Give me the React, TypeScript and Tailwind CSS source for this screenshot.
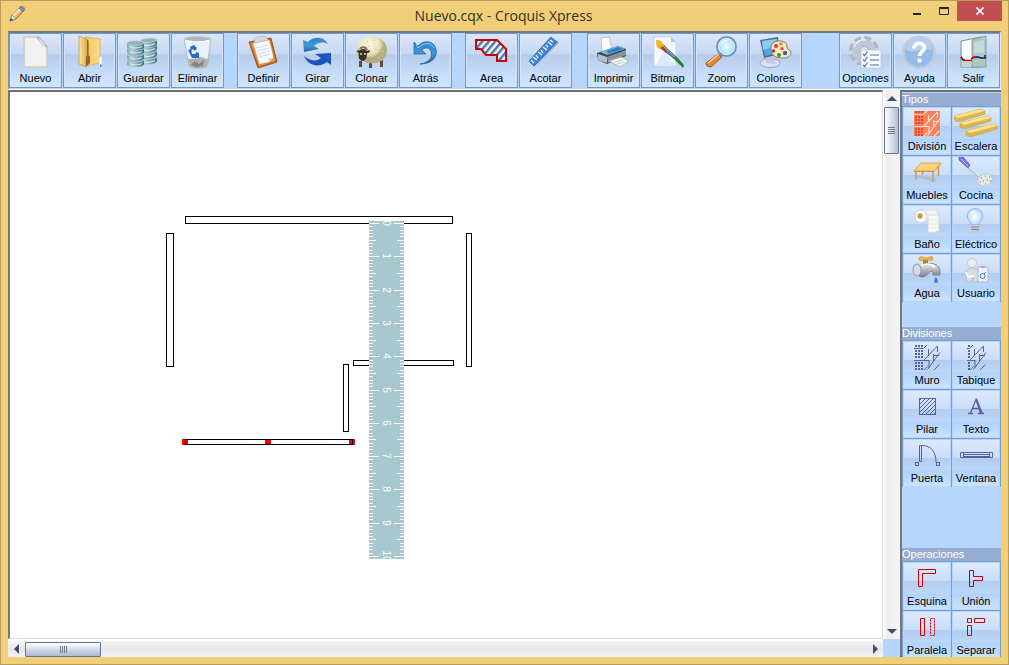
import React from 'react';
import type { ReactNode } from 'react';

type Tool = { label: string; icon: ReactNode };

const NAVY = '#5b5f9e';

/* ---------- Toolbar icons (37 x 34) ---------- */

const newIcon = (
  <>
    <path d="M7 2H22L30 11V32H7Z" fill="#f1f1f1" stroke="#cfccc0" strokeWidth="1.6" />
    <path d="M18 2H22L30 11V14C28 8 23 7 18 2Z" fill="#bdbdbd" />
    <path d="M21 2C22 6 23 9 30 12L22 2Z" fill="#e9e9e9" stroke="#a9a9a9" strokeWidth=".7" />
  </>
);

const openIcon = (
  <>
    <path d="M14 2L29 4V28L14 31Z" fill="url(#folderBack)" stroke="#d8a94b" strokeWidth=".8" />
    <path d="M28 22L31 21V31L28 32Z" fill="#fff" stroke="#bfc7d6" strokeWidth=".6" />
    <path d="M29 29l2 1-1 2h-1z" fill="#3a7be0" />
    <path d="M8 1L17 5V20L15 24V32L8 29Z" fill="url(#folderFront)" stroke="#c79a3c" strokeWidth=".8" />
    <path d="M16 5L17.500 6V20L19 22V28L15 32V22L16 20Z" fill="#8b6a25" />
  </>
);

const disk = (x: number, y: number) => (
  <g key={`${x}-${y}`}>
    <path d={`M${x} ${y}v4c0 4 17 4 17 0v-4z`} fill="url(#diskSide)" />
    <ellipse cx={x + 8.5} cy={y} rx="8.5" ry="2.2" fill="#8fb3be" stroke="#bcd5da" strokeWidth=".6" />
    <path d={`M${x + 2} ${y + 3.6}c3 1.8 9 1.8 13 0`} stroke="#d9edf0" strokeWidth="1" fill="none" />
  </g>
);

const saveIcon = (
  <>
    <g transform="translate(15 3) skewY(-4)">
      {[20, 14, 8, 3].map((y) => disk(0, y))}
    </g>
    {[25, 19, 13, 8].map((y) => disk(2, y))}
  </>
);

const deleteIcon = (
  <>
    <path d="M5 4L10 31C13 34 25 34 28 31L32 4Z" fill="#eaf0f8" stroke="#b9bcc6" />
    <path d="M9 25C13 22 16 26 19 23C22 20 26 25 30 24L28 31C25 34 13 34 10 31Z" fill="#b0b0b4" />
    <path d="M12 30l4-4 4 3 5-4-1 6-7 1z" fill="#85858b" />
    <ellipse cx="18.500" cy="4" rx="13.500" ry="2.400" fill="#aeb3bc" stroke="#c5c8ce" strokeWidth=".9" />
    <path d="M6 5c6 2.500 18 2.500 25 0" stroke="#fff" strokeWidth="1.200" fill="none" />
    <path d="M11 12l4-2 3 3-2 3-2-2-2 2zM9 15l3-1 1 5h4v4h-4zM17 17l3 1v5h-3v2l-2-4 2-3z" fill="#2b6bd0" />
  </>
);

const defineIcon = (
  <>
    <path d="M4 7L26 3L32 27L13 33Z" fill="#b5651d" stroke="#9b5518" strokeWidth=".9" />
    <path d="M5.500 8L25 4.500L30.500 26L14 31.500Z" fill="#e8923c" />
    <path d="M8 8L24 5L28.500 23L24 27L14.500 29Z" fill="#f8faff" />
    <path d="M24 27L23.500 23.500L28.500 23Z" fill="#c3cedd" />
    <path d="M11 13l12-3M12 16l12-3M13 19l12-3M14 22l11-3" stroke="#ccd8ee" strokeWidth="1" />
    <path d="M9 4c2-3 11-4 13-1l1 2-13 3z" fill="#d8dade" stroke="#aeb0b6" strokeWidth=".7" />
  </>
);

const rotateIcon = (
  <>
    <path d="M4 5L9 7C14 1 25 1 29 9C23 6 18 8 15 11L20 14L5 17Z" fill="url(#blueArrow)" />
    <path d="M32 18L32 30L28 27C20 33 9 31 5 21C11 26 18 27 22 23L16 19Z" fill="#1b55bc" />
  </>
);

const sheepIcon = (
  <>
    <path d="M6 26v6h3v-6zM16 28v5h3v-5zM27 26v6h3v-7z" fill="#5d4a39" />
    <ellipse cx="19" cy="15" rx="15" ry="13.500" fill="url(#wool)" />
    <path d="M13 6l2 1M20 5l2 1M26 9l2 1M22 14l2 1M29 16l2 1M18 20l2 1M25 22l2 1M15 11l2 1" stroke="#d5cc9f" strokeWidth="1" />
    <path d="M3 16l4-1c3-2 6-1 7 1l3-1c0 3-2 3-3 3 0 4-1 7-4 8-4 0-5-4-4-8z" fill="#3b3127" />
    <path d="M7 14c2-3 6-2 7 1" stroke="#7b6b52" strokeWidth="2" fill="none" />
    <circle cx="8" cy="19" r=".9" fill="#f0e9b0" />
    <circle cx="12" cy="19" r=".9" fill="#f0e9b0" />
  </>
);

const undoIcon = (
  <>
    <path d="M7 7L11 11C17 4 27 6 29 14C31 23 24 29 13 29C21 28 26 23 24 17C23 12 18 12 15 15L19 19L7 19Z" fill="url(#blueArrow)" stroke="#2c6aa4" strokeWidth=".8" />
    <path d="M9 9l2 4c6-6 13-6 16 0" stroke="#8fd0f0" strokeWidth="1" fill="none" />
  </>
);

const areaIcon = (
  <path d="M3 5H24L33 14V26H24V20H13L8 14H3Z" fill="url(#hatchBlue)" stroke="#cc0000" strokeWidth="2" />
);

const measureIcon = (
  <>
    <path d="M7 32L32 8L30 5L6 29Z" fill="#8b93a5" opacity=".6" />
    <path d="M2 26L24 2L30 7L7 31Z" fill="#3d84dd" stroke="#225fae" strokeWidth=".8" />
    <path d="M4 25l3 3M6 22l4 3M9 20l2 3M11 17l4 3M14 15l2 3M16 12l4 3M19 10l2 2M21 7l4 3M23 5l3 2" stroke="#fff" strokeWidth="1.300" />
  </>
);

const printIcon = (
  <>
    <path d="M6 3L14 2L17 15L7 17Z" fill="#fafafa" stroke="#b8b8bb" strokeWidth=".8" />
    <path d="M2 18L23 11L31 14V21L12 29L3 25Z" fill="#3f454d" />
    <path d="M5 17L23 11L30 14L12 20Z" fill="#79b7de" />
    <path d="M11 16L23 12L28 14L14 18.500Z" fill="#2384cc" />
    <path d="M3 19L12 22V28L3 25Z" fill="#b5bfc9" />
    <path d="M12 22L31 15V20L13 28Z" fill="#8494a3" />
    <path d="M14 26L26 22L34 26L25 32Z" fill="#f3f3f3" stroke="#aaa" strokeWidth=".8" />
    <path d="M20 27l7-2M22 29l7-2" stroke="#c5c5c5" />
  </>
);

const bitmapIcon = (
  <>
    <path d="M5 2H22L27 7V31H5Z" fill="#f7faff" stroke="#c3d5ec" />
    <path d="M22 2V7H27Z" fill="#a9c6ea" />
    <path d="M7 30l8-14 11 14z" fill="#dce9f8" />
    <path d="M7 5C10 5 13 6 15 10L11 14C6 13 8 8 7 5Z" fill="#f3b21b" />
    <path d="M11 13l4-3 5 5-3 3z" fill="#a64b22" />
    <path d="M16 17l3-3 8 7-2 3z" fill="#5a6ea8" />
    <path d="M24 23l3-2 8 9-1 3z" fill="#27832f" />
    <path d="M14 11l12 11" stroke="#e6c9a0" strokeWidth=".8" />
  </>
);

const zoomIcon = (
  <>
    <path d="M15 19L19 22L8 32L4 31L3 28Z" fill="#e48a2d" stroke="#9b5b1c" strokeWidth="1" />
    <path d="M5 28l11-9" stroke="#ffd28b" strokeWidth="1.500" />
    <path d="M15 18l3-2 3 3-3 3z" fill="#70757f" />
    <circle cx="23.500" cy="11.500" r="9.500" fill="url(#lens)" stroke="#6f93c8" strokeWidth="2" />
    <circle cx="23.500" cy="11.500" r="8" fill="none" stroke="#e3f6ff" strokeWidth="1" />
    <path d="M17 10c1-4 5-6 9-5-3 1-6 3-9 5z" fill="#fff" />
  </>
);

const colorsIcon = (
  <>
    <ellipse cx="13" cy="28" rx="10" ry="4.500" fill="#dfe2f4" stroke="#9ca1c0" />
    <path d="M10 21l6 1 3 7-10-1z" fill="#c3c8e4" />
    <path d="M3 5L21 2L23 19L7 23Z" fill="#5d6788" />
    <path d="M5 6L20 4L21 18L8 21Z" fill="#4fa8ee" />
    <path d="M5 6L20 4V10L6 15Z" fill="#86cffb" />
    <path d="M14 14C13 7 21 4 27 7C32 9 28 13 32 15C37 17 32 24 26 23C18 23 14 20 14 14Z" fill="#fbe7c0" stroke="#806a50" strokeWidth=".9" />
    <circle cx="19" cy="11" r="2" fill="#d33" />
    <circle cx="24" cy="9" r="1.800" fill="#e88f20" />
    <circle cx="16.500" cy="16" r="1.700" fill="#c22c24" />
    <circle cx="22" cy="20" r="2" fill="#27943d" />
    <circle cx="28" cy="18" r="2.200" fill="#2467cf" />
    <circle cx="25" cy="13.500" r="1.600" fill="#e23a2e" />
  </>
);

const optionsIcon = (
  <>
    <circle cx="17" cy="16" r="12.500" fill="none" stroke="#a9b6c4" strokeWidth="5" strokeDasharray="6.500 3.300" />
    <circle cx="17" cy="16" r="8.500" fill="none" stroke="#bcc8d3" strokeWidth="7" />
    <circle cx="17" cy="16" r="4.500" fill="#dde8f5" stroke="#9aa9b9" />
    <path d="M7 12c2-5 7-8 12-7" stroke="#e8eef4" strokeWidth="1.500" fill="none" />
    <rect x="14" y="15" width="20" height="18" fill="#f8fbff" stroke="#b8c2d3" strokeWidth=".8" />
    <path d="M16 19l1.500 1.500 3-4M16 24.500l1.500 1.500 3-4M16 30l1.500 1.500 3-4" stroke="#4c6dac" fill="none" strokeWidth="1.200" />
    <path d="M23 20h9M23 25h9M23 30h9" stroke="#8b9ab5" strokeWidth="1.500" />
  </>
);

const helpIcon = (
  <>
    <circle cx="18" cy="17.500" r="15.500" fill="#97bbe8" stroke="#bfcbdc" strokeWidth="2.500" />
    <path d="M5 15a13 13 0 0 1 26 0c-8-3-17 4-26 0z" fill="#b3cff1" />
    <path d="M13 13.500c0-7 10.500-6.500 10.500-.8 0 4-5 4-5 8.300" fill="none" stroke="#fff" strokeWidth="3.600" />
    <rect x="16.500" y="23.500" width="4" height="4" rx="1" fill="#fff" />
  </>
);

const exitIcon = (
  <>
    <path d="M6 6L26 2V32H6Z" fill="#e4f0ee" stroke="#70817f" strokeWidth=".8" />
    <path d="M7 7L16 5V23H7Z" fill="#fafdfd" />
    <path d="M7 27H16V32H7Z" fill="#c4d6d4" />
    <path d="M17 5L31 1V32H17Z" fill="#adc7c4" stroke="#7b9794" strokeWidth=".8" />
    <path d="M19 8L29 5V18H19Z" fill="#c4dad7" />
    <path d="M6 22l2 3h2M16 24l3-2 4 0 3 1h4v-3" stroke="#222" strokeWidth="1.500" fill="none" />
    <path d="M8 25.500h9M17 22.500h5" stroke="#e80000" strokeWidth="1.300" />
    <path d="M21 22h3" stroke="#2b3bb0" strokeWidth="1.500" fill="none" />
  </>
);

/* ---------- Side panel icons (44 x 29) ---------- */

const blocks = (columns: number[], color: string) =>
  columns.map((x) =>
    [3, 8, 11, 14, 20, 23, 26].map((y) => (
      <rect key={`${x}-${y}`} x={x} y={y} width="2" height="2" fill={color} />
    )),
  );

const bond =
  'M18.500 6.500L22 3M18.500 18.500L32.500 4M32.500 4V10M23.500 7V13.500M18.500 18.500H24M24 18V26M19 28L22.500 24.500M22.500 27.500L35 10.500M28.500 12V19M28.500 13.500H34M29 28L34.500 22.500';

const divisionIcon = (
  <>
    <rect x="9" y="3" width="26" height="25" fill="#ff7f5c" />
    {blocks([10, 13, 16], '#e8492b')}
    <path d={bond} fill="none" stroke="#ffe4d6" strokeWidth="1.200" />
    <path d="M9 6.500h9.500M9 18.500h9.500" stroke="#ffd0be" />
  </>
);

const beam = (x: number, y: number) => (
  <g key={x}>
    <path d={`M${x} ${y + 7}l27-7 4 2v3l-27 8-4-2z`} fill="#d9b650" stroke="#c29e44" strokeWidth=".6" />
    <path d={`M${x} ${y + 7}l27-7 4 2-27 7z`} fill="#ffe288" />
  </g>
);

const stairsIcon = <>{beam(0, 1)}{beam(6, 8)}{beam(12, 16)}</>;

const furnitureIcon = (
  <>
    <path d="M15 18L32 22L29 25L12 20Z" fill="#a9b8cd" opacity=".7" />
    <path d="M11 14v9M28 15v10M17.500 9v9M33.500 9v10" stroke="#d39a48" strokeWidth="1.500" />
    <path d="M16 6H36L29 14H9Z" fill="#ffd181" stroke="#dc9a3f" strokeWidth=".8" />
    <path d="M9 14h20v1H9zM29 14l7-8v1l-7 8z" fill="#d5933a" />
  </>
);

const kitchenIcon = (
  <>
    <path d="M14 10L25 20" stroke="#b7c1cb" strokeWidth="2.500" />
    <path d="M14 9L25 19" stroke="#fff" strokeWidth="1" />
    <path d="M5 0L9 0L16 8L14 11L5 3Z" fill="#7676e8" stroke="#5252b8" strokeWidth=".7" />
    <path d="M7 2l7 7" stroke="#b8b8ff" />
    <ellipse cx="31" cy="23" rx="7.500" ry="6" fill="#e4e9e4" stroke="#bcc6bf" strokeWidth=".8" transform="rotate(-18 31 23)" />
    <path d="M27 21h1M31 19h1M35 20h1M29 24h1M33 23h1M36 24h1M31 27h1M26 25h1" stroke="#93a097" strokeWidth="1.300" />
  </>
);

const bathIcon = (
  <>
    <path d="M17 4L31 4L34 10V14H18Z" fill="#f2f2f2" stroke="#d2d5db" strokeWidth=".6" />
    <ellipse cx="16" cy="10.500" rx="6" ry="6.500" fill="#f8f8f5" stroke="#c8cbd2" strokeWidth=".8" />
    <ellipse cx="15" cy="10" rx="2.500" ry="2.700" fill="#c09a46" />
    <path d="M23 9h11v17l-2-1-2 2-2-1-2 1-3-1z" fill="#f7f7f4" stroke="#cfd1d4" strokeWidth=".8" />
    <path d="M24 14h9M24 18h9M24 22h9" stroke="#dcdcd8" strokeDasharray="1 1" />
  </>
);

const bulbIcon = (
  <>
    <path d="M17 19c0-4-4-5-4-9a8 7.500 0 0 1 16 0c0 4-4 5-4 9z" fill="url(#bulb)" stroke="#8fb5ea" />
    <path d="M16 9c0-3 3-5 6-4-2 1-5 3-6 4z" fill="#fff" />
    <path d="M17 19h8v5l-2 3h-4l-2-3z" fill="#c3c9d2" />
    <path d="M17 21h8M17 23.500h8" stroke="#7f8895" />
  </>
);

const waterIcon = (
  <>
    <path d="M18 5h5v6h-5z" fill="#b3812b" />
    <path d="M14 3c2-3 5 0 7 0s6-3 7 0-4 2-7 2-7 2-7-2z" fill="#f1b73d" stroke="#c78e2c" strokeWidth=".7" />
    <path d="M9 12c0-4 5-3 6 0 5-5 20-6 20 5v3h-7v-3c-3-3-5 4-10 5-5 0-9-4-9-10z" fill="url(#metal)" stroke="#73767c" strokeWidth=".8" />
    <ellipse cx="12" cy="15" rx="4" ry="6" fill="#d7dade" stroke="#8a8e96" strokeWidth=".8" />
    <path d="M16 11c4-3 11-3 14 2" stroke="#fff" fill="none" strokeWidth="1.400" />
    <path d="M31 22c2 3 3 6 0 6s-2-3 0-6z" fill="#3c79db" />
  </>
);

const userIcon = (
  <>
    <circle cx="18" cy="8" r="4.500" fill="#eceef1" stroke="#b9bdc7" strokeWidth=".8" />
    <path d="M12 18c0-6 12-7 13-1l-1 10h-4l-1-5-2 5h-4z" fill="#d8dce3" stroke="#b3b8c2" strokeWidth=".8" />
    <path d="M12 17l2 5 6-1" stroke="#fff" strokeWidth="2" fill="none" />
    <rect x="24" y="12" width="10" height="15" fill="#edf4ff" stroke="#9cadca" strokeWidth=".8" />
    <rect x="27" y="11" width="4" height="2" fill="#a5adbd" />
    <circle cx="28.500" cy="21" r="2.500" fill="none" stroke="#3f7bdc" />
    <path d="M30 19l2-2" stroke="#3f7bdc" />
  </>
);

const wallIcon = (
  <>
    {blocks([10, 13, 16], NAVY)}
    <path d={bond} fill="none" stroke={NAVY} />
    <path d="M9 6.500h9.500M9 18.500h9.500" stroke={NAVY} />
  </>
);

const partitionIcon = (
  <g transform="translate(-3 0)">
    {blocks([17], NAVY)}
    <path d={bond} fill="none" stroke={NAVY} />
    <path d="M16 6.500h2.500M16 18.500h2.500" stroke={NAVY} />
  </g>
);

const pillarIcon = <rect x="14.500" y="7.500" width="16" height="16" fill="url(#hatchNavy)" stroke={NAVY} />;

const textIcon = (
  <path d="M14 22.500h5M24 22.500h6M16.500 22L22 8.500L26.500 22M18.500 17.500h7M22.500 8L28 22" fill="none" stroke={NAVY} strokeWidth="1.300" />
);

const doorIcon = (
  <g fill="none" stroke={NAVY}>
    <path d="M14.500 5.500h2v16h-2z" />
    <path d="M17 5.500c9 0 14 6 14 17" />
    <rect x="10.500" y="22.500" width="3" height="3" />
    <rect x="31.500" y="22.500" width="3" height="3" />
  </g>
);

const windowIcon = (
  <g fill="none" stroke={NAVY}>
    <path d="M6.500 12.500h32v5h-32zM9.500 12.500v5M35.500 12.500v5M9 14.500h26M9 16.500h26" />
  </g>
);

const red = (d: string, dash?: string) => (
  <path d={d} fill="none" stroke="#cc0000" strokeDasharray={dash} />
);

const cornerIcon = red('M13.500 6.500H30.500V10.500H17.500V23.500H13.500Z');
const unionIcon = red('M15.500 7.500H19.500V13.500H28.500V17.500H19.500V23.500H15.500Z');
const parallelIcon = <>{red('M15.500 6.500H19.500V23.500H15.500Z')}{red('M25.500 6.500H29.500V23.500H25.500Z', '2 1')}</>;
const separateIcon = red('M13.500 6.500H17.500V10.500H13.500ZM20.500 6.500H30.500V10.500H20.500ZM13.500 13.500H17.500V23.500H13.500Z');

/* ---------- Data ---------- */

const editTools: Tool[][] = [
  [
    { label: 'Nuevo', icon: newIcon },
    { label: 'Abrir', icon: openIcon },
    { label: 'Guardar', icon: saveIcon },
    { label: 'Eliminar', icon: deleteIcon },
  ],
  [
    { label: 'Definir', icon: defineIcon },
    { label: 'Girar', icon: rotateIcon },
    { label: 'Clonar', icon: sheepIcon },
    { label: 'Atrás', icon: undoIcon },
  ],
  [
    { label: 'Area', icon: areaIcon },
    { label: 'Acotar', icon: measureIcon },
  ],
];

const viewTools: Tool[] = [
  { label: 'Imprimir', icon: printIcon },
  { label: 'Bitmap', icon: bitmapIcon },
  { label: 'Zoom', icon: zoomIcon },
  { label: 'Colores', icon: colorsIcon },
];

const systemTools: Tool[] = [
  { label: 'Opciones', icon: optionsIcon },
  { label: 'Ayuda', icon: helpIcon },
  { label: 'Salir', icon: exitIcon },
];

const typeTools: Tool[] = [
  { label: 'División', icon: divisionIcon },
  { label: 'Escalera', icon: stairsIcon },
  { label: 'Muebles', icon: furnitureIcon },
  { label: 'Cocina', icon: kitchenIcon },
  { label: 'Baño', icon: bathIcon },
  { label: 'Eléctrico', icon: bulbIcon },
  { label: 'Agua', icon: waterIcon },
  { label: 'Usuario', icon: userIcon },
];

const divisionTools: Tool[] = [
  { label: 'Muro', icon: wallIcon },
  { label: 'Tabique', icon: partitionIcon },
  { label: 'Pilar', icon: pillarIcon },
  { label: 'Texto', icon: textIcon },
  { label: 'Puerta', icon: doorIcon },
  { label: 'Ventana', icon: windowIcon },
];

const operationTools: Tool[] = [
  { label: 'Esquina', icon: cornerIcon },
  { label: 'Unión', icon: unionIcon },
  { label: 'Paralela', icon: parallelIcon },
  { label: 'Separar', icon: separateIcon },
];

/* ---------- Components ---------- */

function Gradients() {
  return (
    <svg className="absolute h-0 w-0" aria-hidden="true">
      <defs>
        <linearGradient id="folderBack"><stop stopColor="#f1c25c" /><stop offset="1" stopColor="#fbdc8c" /></linearGradient>
        <linearGradient id="folderFront"><stop stopColor="#ffe6a1" /><stop offset="1" stopColor="#d5a445" /></linearGradient>
        <linearGradient id="diskSide"><stop stopColor="#7da5b2" /><stop offset=".3" stopColor="#b4d0d7" /><stop offset="1" stopColor="#3f7080" /></linearGradient>
        <linearGradient id="blueArrow" x2="0" y2="1"><stop stopColor="#2f7fce" /><stop offset=".5" stopColor="#3e9ad8" /><stop offset="1" stopColor="#2d62a2" /></linearGradient>
        <radialGradient id="wool" cx=".4" cy=".3"><stop stopColor="#fbf7df" /><stop offset=".7" stopColor="#ebe3bd" /><stop offset="1" stopColor="#b5aa80" /></radialGradient>
        <radialGradient id="lens"><stop stopColor="#f0fdff" /><stop offset="1" stopColor="#97d8f7" /></radialGradient>
        <radialGradient id="bulb"><stop stopColor="#fff" /><stop offset="1" stopColor="#b9d5ff" /></radialGradient>
        <linearGradient id="metal" x2="0" y2="1"><stop stopColor="#eceef0" /><stop offset="1" stopColor="#777c86" /></linearGradient>
        <pattern id="hatchBlue" width="5" height="5" patternUnits="userSpaceOnUse" patternTransform="rotate(40)">
          <rect width="5" height="5" fill="#fff" /><rect width="2.500" height="5" fill="#4a74b5" />
        </pattern>
        <pattern id="hatchNavy" width="4" height="4" patternUnits="userSpaceOnUse">
          <path d="M-1 1L1 -1M0 4L4 0M3 5L5 3" stroke={NAVY} strokeWidth="1" />
        </pattern>
      </defs>
    </svg>
  );
}

function ToolbarButton({ label, icon }: Tool) {
  return (
    <button
      type="button"
      className="flex h-[55px] w-[53px] shrink-0 flex-col items-center border border-[#6f98d0] bg-linear-[180deg,#dce6f8_0%,#c6d8f3_38%,#b5cbea_39%,#c6defa_75%,#cfe6ff_100%] pt-px text-[11px] leading-4 text-black shadow-[inset_0_0_0_1px_#d3e4fb]"
    >
      <svg width="37" height="34" viewBox="0 0 37 34" aria-hidden="true">{icon}</svg>
      <span className="mt-px">{label}</span>
    </button>
  );
}

function SideButton({ label, icon }: Tool) {
  return (
    <button
      type="button"
      className="flex h-12 flex-col items-center border border-[#b5d3fb] bg-linear-[180deg,#dbe9fc_0%,#c8defb_38%,#b3cdef_40%,#bcd6f8_65%,#b2d2fa_68%,#c9e3ff_100%] text-[11px] leading-4 text-black"
    >
      <svg width="44" height="29" viewBox="0 0 44 29" className="shrink-0" aria-hidden="true">{icon}</svg>
      <span className="mt-px whitespace-nowrap">{label}</span>
    </button>
  );
}

function SideSection({ title, tools }: { title: string; tools: Tool[] }) {
  return (
    <section className="shrink-0">
      <h2 className="h-[13px] bg-[#95add0] text-[11px] leading-[13px] text-white">{title}</h2>
      <div className="grid grid-cols-2 gap-px border border-b-0 border-[#779fd6] bg-[#779fd6]">
        {tools.map((tool) => <SideButton key={tool.label} {...tool} />)}
      </div>
    </section>
  );
}

function Ruler() {
  const ticks = Array.from({ length: 101 }, (_, i) => {
    const y = Math.round(223 + (i * 33.3) / 10);
    const w = i % 10 === 0 ? 10 : i % 5 === 0 ? 7 : 4;
    return (
      <g key={i} fill="#fff">
        <rect x="369" y={y} width={w} height="1" />
        <rect x={404 - w} y={y} width={w} height="1" />
      </g>
    );
  });
  return (
    <g>
      <rect x="369" y="221" width="35" height="338" fill="#a8c8d0" />
      {ticks}
      {Array.from({ length: 11 }, (_, n) => (
        <text
          key={n}
          transform={`translate(383 ${Math.round(223 + n * 33.3)}) rotate(90)`}
          textAnchor="middle"
          fill="#fff"
          className="font-['Liberation_Sans',sans-serif] text-[10px]"
        >
          {n}
        </text>
      ))}
    </g>
  );
}

const walls = [
  [185, 216, 267, 7],
  [166, 233, 7, 133],
  [466, 233, 5, 133],
  [353, 360, 100, 5],
  [343, 364, 5, 67],
];

function Plan() {
  return (
    <svg className="block h-full w-full" role="img" aria-label="Croquis">
      <g transform="translate(-10 -92)" shapeRendering="crispEdges">
        {walls.map(([x, y, w, h]) => (
          <rect key={`${x}-${y}`} x={x + 0.5} y={y + 0.5} width={w} height={h} fill="#fff" stroke="#000" />
        ))}
        {[182, 265, 349].map((x) => <rect key={x} x={x} y="439" width="6" height="6" fill="#f00" />)}
        <rect x="185.500" y="439.500" width="167" height="5" fill="none" stroke="#000" />
        <rect x="188" y="440" width="77" height="4" fill="#fff" />
        <rect x="271" y="440" width="78" height="4" fill="#fff" />
        <Ruler />
      </g>
    </svg>
  );
}

function Arrow({ label, d }: { label: string; d: string }) {
  return (
    <button type="button" aria-label={label} className="grid h-4 w-4 shrink-0 place-items-center">
      <svg width="10" height="10" viewBox="0 0 10 10" aria-hidden="true"><path d={d} fill="#454b70" /></svg>
    </button>
  );
}

export default function App() {
  return (
    <div className="flex h-screen flex-col overflow-hidden border border-[#b89d5b] bg-[#f0cf78] px-[7px] pb-[7px] font-['Liberation_Sans',Arial,sans-serif]">
      <Gradients />
      <header className="relative flex h-[30px] shrink-0 items-center">
        <svg width="18" height="18" viewBox="0 0 18 18" className="-mt-1" aria-hidden="true">
          <path d="M2 16L4 10L12 2L16 5L8 14Z" fill="#f2b06a" stroke="#6b5a45" strokeWidth=".8" />
          <path d="M4 10L11 3L13 5L6 12Z" fill="#ffe0a8" />
          <path d="M2 16L4 10L8 14Z" fill="#f4ead6" stroke="#777" strokeWidth=".6" />
          <path d="M2 16l1-3 2 2z" fill="#263b6e" />
          <path d="M11 3l2-2 4 3-2 3z" fill="#5a9fd4" stroke="#456" strokeWidth=".6" />
          <path d="M13 1h2l2 2v1z" fill="#e27860" />
        </svg>
        <h1 className="flex-1 pr-5 text-center font-['Open_Sans','Noto_Sans',sans-serif] text-[14px] leading-[30px] text-[#343028]">
          Nuevo.cqx - Croquis Xpress
        </h1>
        <div className="absolute top-0 right-0 -mr-px flex h-5">
          <button type="button" aria-label="Minimizar" className="grid w-[26px] place-items-center">
            <svg width="8" height="10" aria-hidden="true"><path d="M0 7h8v2H0z" fill="#222" /></svg>
          </button>
          <button type="button" aria-label="Maximizar" className="grid w-[27px] place-items-center">
            <svg width="10" height="8" aria-hidden="true"><path d="M.5 1.500h9v6h-9zM0 .5h10" fill="none" stroke="#222" /></svg>
          </button>
          <button type="button" aria-label="Cerrar" className="grid w-[45px] place-items-center bg-[#c14e50]">
            <svg width="8" height="8" aria-hidden="true"><path d="M.5 .5l7 7M7.500 .5l-7 7" stroke="#fff" strokeWidth="1.700" /></svg>
          </button>
        </div>
      </header>

      <nav aria-label="Herramientas" className="flex h-[58px] shrink-0 items-start justify-between border-t-2 border-r border-l border-t-[#747986] border-r-[#dbe8fa] border-l-[#8490a3] bg-[#b7d6fe]">
        <div className="flex gap-[15px]">
          <div className="flex gap-[13px]">
            {editTools.map((group) => (
              <div key={group[0].label} className="flex gap-px">
                {group.map((tool) => <ToolbarButton key={tool.label} {...tool} />)}
              </div>
            ))}
          </div>
          <div className="flex gap-px">
            {viewTools.map((tool) => <ToolbarButton key={tool.label} {...tool} />)}
          </div>
        </div>
        <div className="flex gap-px">
          {systemTools.map((tool) => <ToolbarButton key={tool.label} {...tool} />)}
        </div>
      </nav>

      <div className="flex min-h-0 flex-1 border-t border-white bg-[#f1f1f1]">
        <div className="flex min-w-0 flex-1 flex-col">
          <div className="flex min-h-0 flex-1">
            <main id="plan" className="min-w-0 flex-1 border-t-2 border-r border-b border-l-2 border-t-[#6e6e6e] border-r-[#dedede] border-b-[#dedede] border-l-[#777] bg-white">
              <Plan />
            </main>
            <div className="flex w-[17px] shrink-0 flex-col items-center bg-linear-to-r from-[#fff] from-5% via-[#ededed] via-20% to-[#f4f4f4] pt-px">
              <Arrow label="Subir" d="M0 7L5 2L10 7Z" />
              <div role="scrollbar" aria-label="Desplazamiento vertical" aria-controls="plan" aria-orientation="vertical" aria-valuenow={0} className="grid h-[47px] w-[15px] place-items-center rounded-[1px] border border-[#6a7199] bg-linear-to-r from-white to-[#b0bed5]">
                <div className="flex flex-col gap-px">
                  {[0, 1, 2, 3].map((n) => <i key={n} className="h-px w-[7px] bg-[#737989]" />)}
                </div>
              </div>
              <div className="flex-1" />
              <Arrow label="Bajar" d="M0 3L5 8L10 3Z" />
            </div>
          </div>
          <div className="flex h-[18px] shrink-0">
            <div className="flex min-w-0 flex-1 items-center border-t-2 border-white bg-linear-to-b from-[#f4f4f4] via-[#e8e8e8] to-[#f4f4f4] pl-px">
              <Arrow label="Izquierda" d="M7 0L2 5L7 10Z" />
              <div role="scrollbar" aria-label="Desplazamiento horizontal" aria-controls="plan" aria-orientation="horizontal" aria-valuenow={0} className="grid h-[15px] w-[76px] place-items-center rounded-[1px] border border-[#6a7199] bg-linear-to-b from-white to-[#a8b9d2]">
                <div className="flex gap-px">
                  {[0, 1, 2, 3].map((n) => <i key={n} className="h-[7px] w-px bg-[#737989]" />)}
                </div>
              </div>
              <div className="flex-1" />
              <Arrow label="Derecha" d="M3 0L8 5L3 10Z" />
            </div>
            <div className="w-[17px] bg-[#b4d4fe]" />
          </div>
        </div>

        <aside className="flex w-[101px] shrink-0 flex-col overflow-hidden border-t-2 border-l-2 border-t-[#6e6e6e] border-l-[#777] bg-[#b7d6fe] pt-px">
          <SideSection title="Tipos" tools={typeTools} />
          <div className="h-[25px] shrink-0" />
          <SideSection title="Divisiones" tools={divisionTools} />
          <div className="h-[61px] shrink-0" />
          <SideSection title="Operaciones" tools={operationTools} />
        </aside>
      </div>
    </div>
  );
}
